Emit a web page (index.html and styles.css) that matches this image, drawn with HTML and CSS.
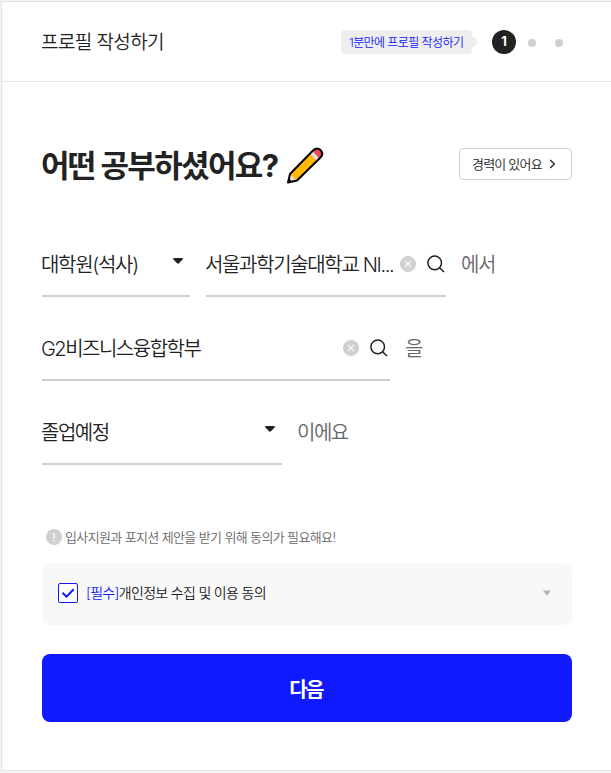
FILE: index.html
```html
<!DOCTYPE html>
<html lang="ko">
<head>
<meta charset="utf-8">
<title>프로필 작성하기</title>
<link rel="stylesheet" href="styles.css">
</head>
<body>
<main class="card">
  <header class="header">
    <h1 class="header-title">프로필 작성하기</h1>
    <div class="steps">
      <span class="tip"><span>1분만에 프로필 작성하기</span></span>
      <span class="step-current">1</span>
      <span class="dot"></span>
      <span class="dot"></span>
    </div>
  </header>
  <section class="content">
    <div class="heading-row">
      <h2 class="heading">어떤 공부하셨어요?</h2>
      <svg class="pencil" width="38" height="38" viewBox="0 0 38 38">
        <path d="M2 36.500L4 28L27.500 4Q31 1 34.500 4Q38 8 34.500 11.500L11 34.500Z" fill="#ffb900"/>
        <path d="M24 7.500L27.500 4Q31 1 34.500 4Q38 8 34.500 11.500L31 15Z" fill="#dededf"/>
        <path d="M26.500 5L27.500 4Q31 1 34.500 4Q38 8 34.500 11.500L33.500 12.500Z" fill="#e74856"/>
        <path d="M4 28L11 34.500L2 36.500Z" fill="#f3d6c4"/>
        <path d="M2 36.500L4 28L27.500 4Q31 1 34.500 4Q38 8 34.500 11.500L11 34.500Z" fill="none" stroke="#000" stroke-width="2" stroke-linejoin="round"/>
        <path d="M2 36.500L3 32.500L6 35.500Z" fill="#000"/>
      </svg>
      <button class="career"><span>경력이 있어요</span><svg width="7" height="10" viewBox="0 0 7 10"><path d="M1.200 1L5.400 5L1.200 9" fill="none" stroke="#222" stroke-width="1.300"/></svg></button>
    </div>

    <div class="row">
      <div class="field degree"><span class="value v-degree">대학원(석사)</span><svg class="caret" width="12" height="8" viewBox="0 0 12 8"><path d="M1.800 1H10.200Q11.400 1.200 10.600 2.400L7 6.300Q6 7.100 5 6.300L1.400 2.400Q.6 1.200 1.800 1Z" fill="#222"/></svg></div>
      <div class="field school"><span class="value v-school">서울과학기술대학교 NI...</span><span class="tools"><svg width="16" height="16" viewBox="0 0 16 16"><circle cx="8" cy="8" r="8" fill="#d0d0d0"/><path d="M4.800 4.800L11.200 11.200M11.200 4.800L4.800 11.200" stroke="#fff" stroke-width="1.100"/></svg><svg width="18" height="18" viewBox="0 0 18 18"><circle cx="7.700" cy="7.900" r="6.800" fill="none" stroke="#222" stroke-width="1.500"/><path d="M12.300 12.500L17 17" stroke="#222" stroke-width="1.600"/></svg></span></div>
      <span class="suffix">에서</span>
    </div>
    <div class="row">
      <div class="field major"><span class="value v-major">G2비즈니스융합학부</span><span class="tools"><svg width="16" height="16" viewBox="0 0 16 16"><circle cx="8" cy="8" r="8" fill="#d0d0d0"/><path d="M4.800 4.800L11.200 11.200M11.200 4.800L4.800 11.200" stroke="#fff" stroke-width="1.100"/></svg><svg width="18" height="18" viewBox="0 0 18 18"><circle cx="7.700" cy="7.900" r="6.800" fill="none" stroke="#222" stroke-width="1.500"/><path d="M12.300 12.500L17 17" stroke="#222" stroke-width="1.600"/></svg></span></div>
      <span class="suffix">을</span>
    </div>
    <div class="row">
      <div class="field status"><span class="value v-status">졸업예정</span><svg class="caret" width="12" height="8" viewBox="0 0 12 8"><path d="M1.800 1H10.200Q11.400 1.200 10.600 2.400L7 6.300Q6 7.100 5 6.300L1.400 2.400Q.6 1.200 1.800 1Z" fill="#222"/></svg></div>
      <span class="suffix">이에요</span>
    </div>

    <p class="notice"><svg width="16" height="16" viewBox="0 0 16 16"><circle cx="8" cy="8" r="8" fill="#d0d0d0"/><path d="M8 4V9.500M8 11V12.500" stroke="#fff" stroke-width="1.400"/></svg><span>입사지원과 포지션 제안을 받기 위해 동의가 필요해요!</span></p>
    <div class="consent">
      <svg class="checkbox" width="20" height="20" viewBox="0 0 20 20"><rect x=".5" y=".5" width="19" height="19" rx="1.500" fill="#fff" stroke="#1119ff"/><path d="M4.500 9.800L8.500 13.600L15.700 6.300" fill="none" stroke="#1119ff" stroke-width="2"/></svg>
      <span class="consent-text"><em>[필수]</em><span>개인정보 수집 및 이용 동의</span></span>
      <svg class="consent-caret" width="8" height="6" viewBox="0 0 8 6"><path d="M0 .5H8L4.500 5.200H3.500Z" fill="#b5b5b5"/></svg>
    </div>
    <button class="next">다음</button>
  </section>
</main>
</body>
</html>
```
FILE: styles.css
```css
* { box-sizing: border-box; }
body {
  margin: 0;
  padding: 1px 0 0 1px;
  height: 773px;
  overflow: hidden;
  background: #f3f3f3;
  color: #222;
  font-family: Inter, "Noto Sans CJK KR", sans-serif;
  font-weight: 350;
}
h1, h2, p { margin: 0; }
button { font-family: inherit; color: inherit; padding: 0; }
svg { display: block; flex: none; }
span, h1, h2, button { white-space: nowrap; }

.card {
  height: 770px;
  background: #fff;
  border: 1px solid #e5e5e5;
  border-right: 0;
}
.header {
  height: 80px;
  padding: 0 48px 0 40px;
  border-bottom: 1px solid #e5e5e5;
  display: flex;
  align-items: center;
  justify-content: space-between;
}
.header-title { font-size: 19px; font-weight: 350; line-height: 28px; letter-spacing: -.6px; margin: 2px 0 0 -1px; }
.steps { display: flex; align-items: center; }
.tip {
  position: relative;
  width: 131px;
  height: 24px;
  padding-left: 8px;
  margin-right: 20px;
  border-radius: 4px;
  background: #eee;
  color: #1119ff;
  font-size: 12px;
  line-height: 25px;
  letter-spacing: -.57px;
}
.tip::after {
  content: "";
  position: absolute;
  left: 131px;
  top: 6px;
  border: solid transparent;
  border-width: 6px 0 6px 7px;
  border-left-color: #eee;
}
.step-current {
  width: 24px;
  height: 24px;
  border-radius: 50%;
  background: #222;
  color: #fff;
  font: 700 13px/23px Inter, sans-serif;
  text-align: center;
  margin-right: 12px;
}
.dot { width: 8px; height: 8px; border-radius: 50%; background: #d0d0d0; margin-top: 2px; }
.dot + .dot { margin-left: 19px; }

.content { padding: 64px 39px 0 40px; }
.heading-row { display: flex; align-items: center; height: 38px; }
.heading { font-size: 31px; font-weight: 700; line-height: 38px; letter-spacing: -1.65px; width: 245px; margin: 2px 0 0 -1px; }
.career {
  margin-left: auto;
  margin-top: -2px;
  width: 113px;
  height: 32px;
  padding: 0 15px 0 12px;
  border: 1px solid #d0d0d0;
  border-radius: 4px;
  background: #fff;
  display: flex;
  align-items: center;
  justify-content: space-between;
  font-size: 13px;
  font-weight: 350;
  line-height: 30px;
  letter-spacing: -.8px;
}

.row { display: flex; align-items: stretch; height: 66px; margin-top: 18px; }
.heading-row + .row { margin-top: 47px; }
.field { display: flex; align-items: center; justify-content: space-between; border-bottom: 2px solid #d0d0d0; }
.value, .suffix { font-size: 20px; line-height: 30px; }
.value { margin: 3px 0 0 -1px; }
.degree { width: 148px; padding-right: 6px; }
.school { width: 240px; margin-left: 16px; padding-right: 1px; }
.major { width: 348px; padding-right: 2px; }
.status { width: 240px; padding-right: 6px; }
.v-degree { letter-spacing: -1.3px; }
.v-school { letter-spacing: -1.35px; }
.v-major { letter-spacing: -1.5px; }
.v-status { letter-spacing: -1.5px; }
.caret { margin-top: -4px; }
.tools { display: flex; align-items: center; gap: 11px; padding-top: 2px; }
.suffix { color: #666; margin: 2px 0 0 15px; align-self: center; letter-spacing: -1.5px; }

.notice {
  display: flex;
  align-items: center;
  gap: 3px;
  height: 20px;
  margin-top: 62px;
  padding-left: 4px;
  color: #666;
  font-size: 13px;
  line-height: 20px;
  letter-spacing: -.63px;
}
.consent {
  display: flex;
  align-items: center;
  height: 62px;
  margin-top: 16px;
  padding: 0 21px 2px 16px;
  border-radius: 8px;
  background: #f8f8f8;
}
.consent-text { margin-left: 8px; font-size: 14px; line-height: 20px; letter-spacing: -.69px; }
.consent-text em { color: #1119ff; font-style: normal; }
.consent-caret { margin-left: auto; }
.next {
  display: block;
  width: 100%;
  height: 68px;
  margin-top: 29px;
  border: 0;
  border-radius: 8px;
  background: #1119ff;
  color: #fff;
  font-size: 20px;
  font-weight: 700;
  line-height: 68px;
  letter-spacing: -1.6px;
  padding: 2px 2px 0 0;
}
```
